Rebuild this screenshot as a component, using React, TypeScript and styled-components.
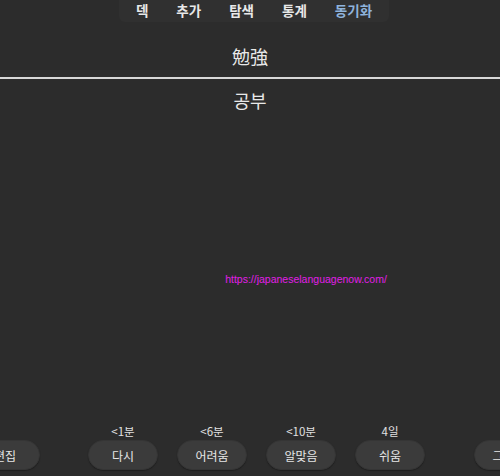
import React from "react";
import styled, { createGlobalStyle } from "styled-components";

const Global = createGlobalStyle`
  html, body { margin: 0; padding: 0; background: #2c2c2c; overflow: hidden; }
  body { font-family: "Noto Sans CJK KR", "Noto Sans", sans-serif; color: #e6e6e6; }
`;

const Page = styled.div`
  height: 476px;
  display: flex;
  flex-direction: column;
  overflow: hidden;
`;

const TopWrap = styled.div`
  display: flex;
  justify-content: center;
`;

const Toolbar = styled.nav`
  display: flex;
  align-items: flex-start;
  height: 22px;
  padding: 0 3px;
  margin-left: 8px;
  background: #303030;
  border-radius: 0 0 6px 6px;
`;

const Tab = styled.span<{ $active?: boolean }>`
  font-size: 13.5px;
  font-weight: 700;
  line-height: 20px;
  padding: 0 14px;
  color: ${(p) => (p.$active ? "#8fb3dc" : "#e8e8e8")};
`;

const Card = styled.main`
  flex: 1;
  display: flex;
  flex-direction: column;
  align-items: center;
  padding-top: 21px;
  font-family: "Noto Sans CJK JP", "Noto Sans CJK KR", sans-serif;
  font-size: 18px;
  color: #e8e8e8;
`;

const Word = styled.div`
  line-height: 26px;
`;

const Rule = styled.hr`
  align-self: stretch;
  margin: 8px 0 8px;
  border: none;
  height: 2px;
  background: #d8d8d8;
`;

const Link = styled.div`
  margin-top: 160px;
  padding-left: 112px;
  font-family: "Liberation Sans", sans-serif;
  font-size: 10.5px;
  color: #e21ee8;
`;

const Bottom = styled.footer`
  display: flex;
  align-items: flex-end;
  margin-left: -30px;
  padding-bottom: 6px;
`;

const Answers = styled.div`
  display: flex;
  gap: 19px;
  margin: 0 49px 0 48px;
`;

const Column = styled.div`
  display: flex;
  flex-direction: column;
  align-items: center;
  gap: 2px;
`;

const Due = styled.span`
  font-size: 11.5px;
  line-height: 14px;
  color: #e0e0e0;
`;

const Button = styled.button`
  flex: none;
  width: 70px;
  height: 30px;
  border-radius: 15px;
  border: 1px solid #353535;
  background: #3b3b3b;
  box-shadow: 0 1px 1px #202020;
  color: #e6e6e6;
  font-family: "Noto Sans CJK KR", sans-serif;
  font-size: 12px;
  padding: 0;
`;

const answers = [
  { due: "<1분", label: "다시" },
  { due: "<6분", label: "어려움" },
  { due: "<10분", label: "알맞음" },
  { due: "4일", label: "쉬움" },
];

export default function App() {
  return (
    <>
      <Global />
      <Page>
        <TopWrap>
          <Toolbar>
            <Tab>덱</Tab>
            <Tab>추가</Tab>
            <Tab>탐색</Tab>
            <Tab>통계</Tab>
            <Tab $active>동기화</Tab>
          </Toolbar>
        </TopWrap>
        <Card>
          <Word>勉強</Word>
          <Rule />
          <Word>공부</Word>
          <Link>https://japaneselanguagenow.com/</Link>
        </Card>
        <Bottom>
          <Button>편집</Button>
          <Answers>
            {answers.map((a) => (
              <Column key={a.label}>
                <Due>{a.due}</Due>
                <Button>{a.label}</Button>
              </Column>
            ))}
          </Answers>
          <Button>그밖에</Button>
        </Bottom>
      </Page>
    </>
  );
}
